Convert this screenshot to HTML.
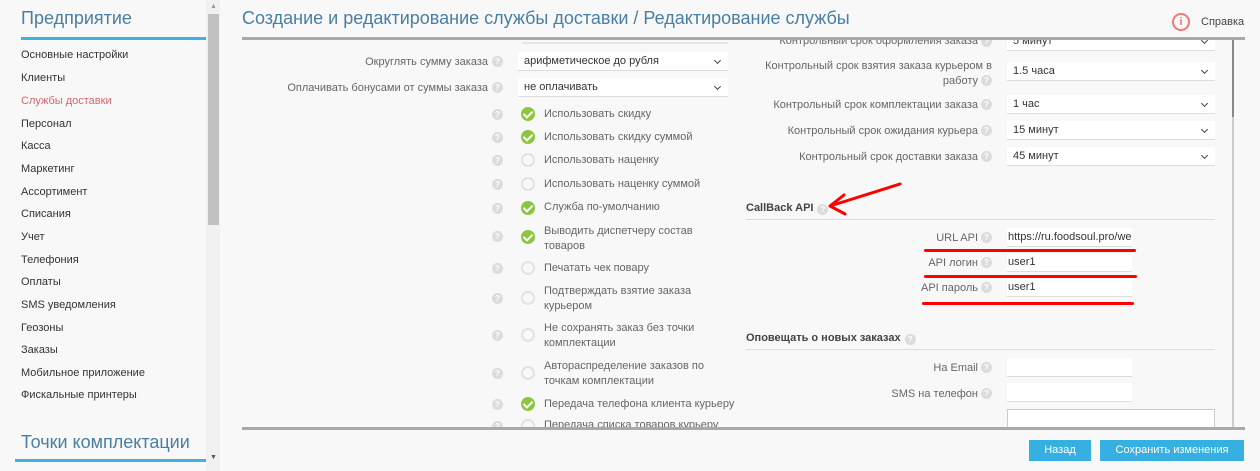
<!DOCTYPE html>
<html><head><meta charset="utf-8"><style>
*{margin:0;padding:0;box-sizing:border-box}
body{width:1260px;height:471px;overflow:hidden;background:#f8f8f8;font-family:"Liberation Sans",sans-serif;font-size:11px;color:#555;position:relative}
.a{position:absolute;white-space:nowrap}
.m{position:absolute;left:21px;font-size:11px;color:#333}
.h{position:absolute;width:11px;height:11px;border-radius:50%;background:#dcdcdc;color:#fff;font-size:8px;line-height:11px;text-align:center;font-weight:bold}
.hi{display:inline-block;width:11px;height:11px;border-radius:50%;background:#dcdcdc;color:#fff;font-size:8px;line-height:11px;text-align:center;font-weight:bold;vertical-align:-1px;margin-left:4px}
.lbl{position:absolute;text-align:right;color:#666;font-size:11px;line-height:14px;white-space:nowrap}
.sel{position:absolute;background:#fff;border-bottom:1px solid #ddd;height:19px;line-height:19px;padding-left:6px;color:#333;font-size:11px}
.sel:after{content:"";position:absolute;right:8px;top:6px;width:4px;height:4px;border-right:1.5px solid #444;border-bottom:1.5px solid #444;transform:rotate(45deg)}
.inp{position:absolute;background:#fff;border-bottom:1px solid #ddd;height:19px;line-height:19px;padding-left:1px;color:#333;font-size:11px;overflow:hidden;white-space:nowrap}
.ck{position:absolute;left:521px;width:14px;height:14px;border-radius:50%;background:#8cc63f}
.ck:after{content:"";position:absolute;left:4px;top:2px;width:4px;height:7px;border-right:2px solid #fff;border-bottom:2px solid #fff;transform:rotate(45deg)}
.un{position:absolute;left:521px;width:14px;height:14px;border-radius:50%;border:2px solid #e2e2e2}
.ct{position:absolute;left:544px;color:#666;font-size:11px;line-height:15px;white-space:nowrap}
.sec{position:absolute;left:746px;font-weight:bold;color:#444;font-size:11px;white-space:nowrap}
.red{position:absolute;height:3px;background:#f00;border-radius:2px}
</style></head><body>
<div class="a" style="left:21px;top:8px;font-size:18px;color:#4a7ea3">Предприятие</div>
<div class="a" style="left:21px;top:37px;width:185px;height:3px;background:#3bb5e0"></div>
<div class="m" style="top:49px">Основные настройки</div>
<div class="m" style="top:72px">Клиенты</div>
<div class="m" style="top:95px;color:#d0696e">Службы доставки</div>
<div class="m" style="top:118px">Персонал</div>
<div class="m" style="top:140px">Касса</div>
<div class="m" style="top:163px">Маркетинг</div>
<div class="m" style="top:186px">Ассортимент</div>
<div class="m" style="top:208px">Списания</div>
<div class="m" style="top:231px">Учет</div>
<div class="m" style="top:254px">Телефония</div>
<div class="m" style="top:276px">Оплаты</div>
<div class="m" style="top:299px">SMS уведомления</div>
<div class="m" style="top:322px">Геозоны</div>
<div class="m" style="top:344px">Заказы</div>
<div class="m" style="top:367px">Мобильное приложение</div>
<div class="m" style="top:389px">Фискальные принтеры</div>
<div class="a" style="left:21px;top:432px;font-size:18px;color:#4a7ea3">Точки комплектации</div>
<div class="a" style="left:15px;top:459px;width:191px;height:3px;background:#3bb5e0"></div>
<div class="a" style="left:206px;top:0;width:14px;height:471px;background:#f1f1f1"></div>
<div class="a" style="left:208px;top:14px;width:11px;height:211px;background:#c1c1c1"></div>
<div class="a" style="left:210px;top:3px;font-size:7px;color:#999">▲</div>
<div class="a" style="left:210px;top:454px;font-size:7px;color:#555">▼</div>
<div class="a" style="left:242px;top:8px;font-size:18px;color:#4a7ea3">Создание и редактирование службы доставки / Редактирование службы</div>
<div class="a" style="left:1172px;top:13px;width:18px;height:18px;border:2px solid #f07a7a;border-radius:50%;color:#f07a7a;font-size:11px;line-height:14px;text-align:center;font-weight:bold">i</div>
<div class="a" style="left:1201px;top:16px;color:#444;font-size:11px">Справка</div>
<div class="a" style="left:242px;top:37px;width:1003px;height:3px;background:#a9a9a9"></div>
<div class="a" style="left:242px;top:427px;width:1003px;height:3px;background:#a9a9a9"></div>
<div class="a" style="left:1232px;top:40px;width:2px;height:387px;background:#ccc"></div>
<div class="a" style="left:1232px;top:40px;width:2px;height:77px;background:#888"></div>
<div class="a" style="left:1029px;top:440px;width:62px;height:21px;background:#36b0e0;color:#fff;text-align:center;line-height:21px">Назад</div>
<div class="a" style="left:1100px;top:440px;width:144px;height:21px;background:#36b0e0;color:#fff;text-align:center;line-height:21px">Сохранить изменения</div>

<div class="a" style="left:522px;top:42px;width:206px;height:2px;background:#e5e5e5"></div>
<div class="lbl" style="right:772px;top:55px">Округлять сумму заказа</div>
<div class="h" style="left:492px;top:56px">?</div>
<div class="sel" style="left:518px;top:52px;width:210px">арифметическое до рубля</div>
<div class="lbl" style="right:772px;top:81px">Оплачивать бонусами от суммы заказа</div>
<div class="h" style="left:492px;top:82px">?</div>
<div class="sel" style="left:518px;top:78px;width:210px">не оплачивать</div>

<div class="h" style="left:492px;top:109px">?</div><div class="ck" style="top:107px"></div><div class="ct" style="top:107px">Использовать скидку</div>
<div class="h" style="left:492px;top:132px">?</div><div class="ck" style="top:130px"></div><div class="ct" style="top:130px">Использовать скидку суммой</div>
<div class="h" style="left:492px;top:155px">?</div><div class="un" style="top:153px"></div><div class="ct" style="top:153px">Использовать наценку</div>
<div class="h" style="left:492px;top:179px">?</div><div class="un" style="top:177px"></div><div class="ct" style="top:177px">Использовать наценку суммой</div>
<div class="h" style="left:492px;top:203px">?</div><div class="ck" style="top:201px"></div><div class="ct" style="top:200px">Служба по-умолчанию</div>
<div class="h" style="left:492px;top:231px">?</div><div class="ck" style="top:230px"></div><div class="ct" style="top:224px">Выводить диспетчеру состав<br>товаров</div>
<div class="h" style="left:492px;top:263px">?</div><div class="un" style="top:261px"></div><div class="ct" style="top:261px">Печатать чек повару</div>
<div class="h" style="left:492px;top:293px">?</div><div class="un" style="top:291px"></div><div class="ct" style="top:284px">Подтверждать взятие заказа<br>курьером</div>
<div class="h" style="left:492px;top:330px">?</div><div class="un" style="top:328px"></div><div class="ct" style="top:321px">Не сохранять заказ без точки<br>комплектации</div>
<div class="h" style="left:492px;top:368px">?</div><div class="un" style="top:366px"></div><div class="ct" style="top:359px">Автораспределение заказов по<br>точкам комплектации</div>
<div class="h" style="left:492px;top:399px">?</div><div class="ck" style="top:397px"></div><div class="ct" style="top:397px">Передача телефона клиента курьеру</div>
<div style="position:absolute;left:0;top:412px;width:740px;height:15px;overflow:hidden">
<div class="h" style="left:492px;top:9px">?</div><div class="un" style="top:7px"></div><div class="ct" style="top:6px">Передача списка товаров курьеру</div>
</div>

<div style="position:absolute;left:0;top:40px;width:1260px;height:387px;overflow:hidden">
<div class="lbl" style="right:282px;top:-6px">Контрольный срок оформления заказа</div>
<div class="h" style="left:981px;top:-4px">?</div>
<div class="sel" style="left:1007px;top:-8px;width:208px">5 минут</div>
</div>
<div class="lbl" style="right:268px;top:59px">Контрольный срок взятия заказа курьером в</div>
<div class="lbl" style="right:282px;top:74px">работу</div>
<div class="h" style="left:981px;top:75px">?</div>
<div class="sel" style="left:1007px;top:62px;width:208px">1.5 часа</div>
<div class="lbl" style="right:282px;top:98px">Контрольный срок комплектации заказа</div>
<div class="h" style="left:981px;top:99px">?</div>
<div class="sel" style="left:1007px;top:95px;width:208px">1 час</div>
<div class="lbl" style="right:282px;top:124px">Контрольный срок ожидания курьера</div>
<div class="h" style="left:981px;top:125px">?</div>
<div class="sel" style="left:1007px;top:121px;width:208px">15 минут</div>
<div class="lbl" style="right:282px;top:150px">Контрольный срок доставки заказа</div>
<div class="h" style="left:981px;top:151px">?</div>
<div class="sel" style="left:1007px;top:147px;width:208px">45 минут</div>

<div class="sec" style="top:202px">CallBack API<span class="hi">?</span></div>
<div class="a" style="left:746px;top:219px;width:469px;height:1px;background:#ddd"></div>
<div class="lbl" style="right:282px;top:231px">URL API</div><div class="h" style="left:981px;top:232px">?</div>
<div class="inp" style="left:1007px;top:228px;width:125px">https://ru.foodsoul.pro/webhook</div>
<div class="lbl" style="right:282px;top:256px">API логин</div><div class="h" style="left:981px;top:257px">?</div>
<div class="inp" style="left:1007px;top:253px;width:125px">user1</div>
<div class="lbl" style="right:282px;top:281px">API пароль</div><div class="h" style="left:981px;top:282px">?</div>
<div class="inp" style="left:1007px;top:278px;width:125px">user1</div>
<div class="red" style="left:924px;top:249px;width:212px"></div>
<div class="red" style="left:924px;top:275px;width:213px"></div>
<div class="red" style="left:922px;top:302px;width:212px"></div>
<svg class="a" style="left:820px;top:178px" width="90" height="40"><path d="M80 6 L10 28 M24 17 L10 28 L25 36" stroke="#f00" stroke-width="3" fill="none" stroke-linecap="round" stroke-linejoin="round"/></svg>

<div class="sec" style="top:332px">Оповещать о новых заказах<span class="hi">?</span></div>
<div class="a" style="left:746px;top:349px;width:469px;height:1px;background:#ddd"></div>
<div class="lbl" style="right:282px;top:361px">На Email</div><div class="h" style="left:981px;top:362px">?</div>
<div class="inp" style="left:1007px;top:358px;width:125px"></div>
<div class="lbl" style="right:282px;top:387px">SMS на телефон</div><div class="h" style="left:981px;top:388px">?</div>
<div class="inp" style="left:1007px;top:383px;width:125px"></div>
<div class="a" style="left:1007px;top:409px;width:208px;height:18px;background:#fff;border:1px solid #ccc;border-bottom:none"></div>
</body></html>
